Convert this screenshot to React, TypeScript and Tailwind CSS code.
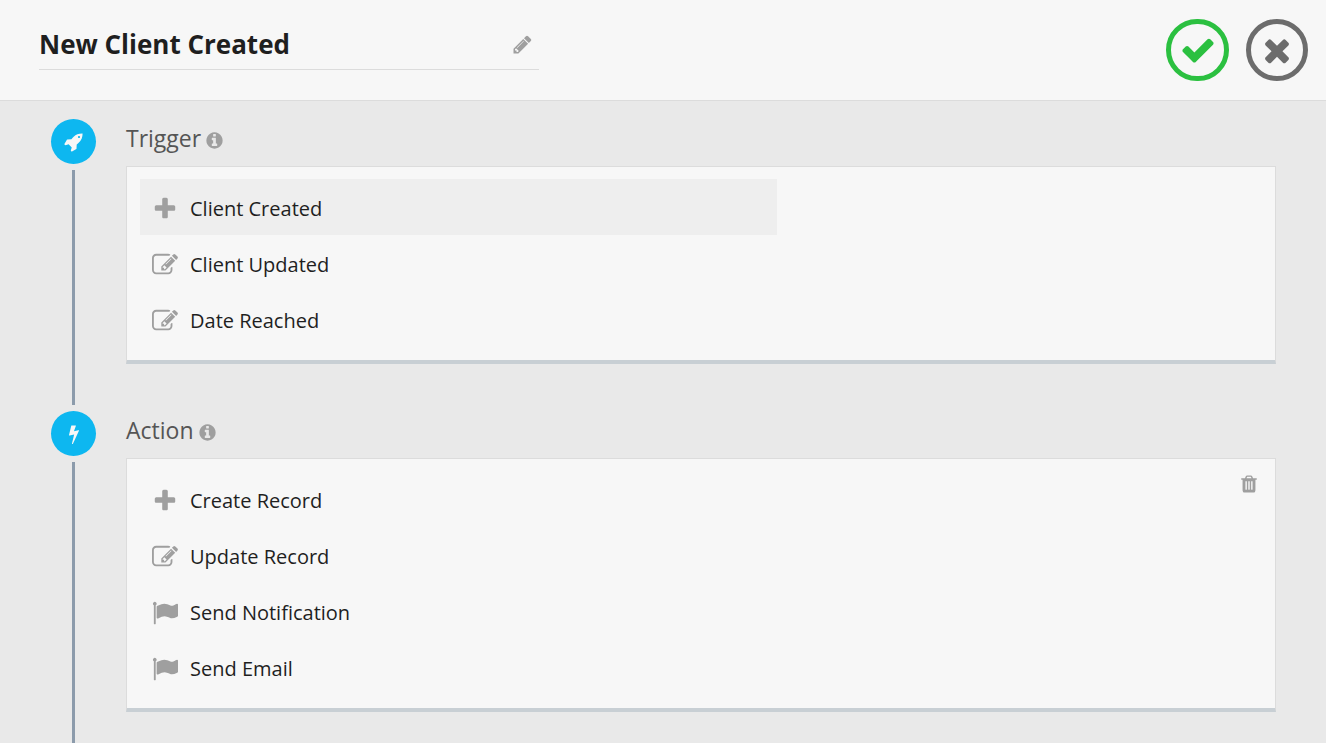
import { useState } from "react";
import clsx from "clsx";

const icons = {
  plus: "M1600 736v192q0 40-28 68t-68 28h-416v416q0 40-28 68t-68 28h-192q-40 0-68-28t-28-68v-416h-416q-40 0-68-28t-28-68v-192q0-40 28-68t68-28h416v-416q0-40 28-68t68-28h192q40 0 68 28t28 68v416h416q40 0 68 28t28 68z",
  pencil:
    "M491 1536l91-91-235-235-91 91v107h128v128h107zm523-928q0-22-22-22-10 0-17 7l-542 542q-7 7-7 17 0 22 22 22 10 0 17-7l542-542q7-7 7-17zm-54-192l416 416-832 832h-416v-416zm683 96q0 53-37 90l-166 166-416-416 166-165q36-38 90-38 53 0 91 38l235 234q37 39 37 91z",
  edit: "M888 1184l116-116-152-152-116 116v56h96v96h56zm440-720q-16-16-33 1l-350 350q-17 17-1 33t33-1l350-350q17-17 1-33zm80 594v190q0 119-84.5 203.5t-203.5 84.5h-832q-119 0-203.5-84.5t-84.5-203.5v-832q0-119 84.5-203.5t203.5-84.5h832q63 0 117 25 15 7 18 23 3 17-9 29l-49 49q-14 14-32 8-23-6-45-6h-832q-66 0-113 47t-47 113v832q0 66 47 113t113 47h832q66 0 113-47t47-113v-126q0-13 9-22l64-64q15-15 35-7t20 29zm-96-738l288 288-672 672h-288v-288zm444 132l-92 92-288-288 92-92q28-28 68-28t68 28l152 152q28 28 28 68t-28 68z",
  info: "M1152 1376v-160q0-14-9-23t-23-9h-96v-512q0-14-9-23t-23-9h-320q-14 0-23 9t-9 23v160q0 14 9 23t23 9h96v320h-96q-14 0-23 9t-9 23v160q0 14 9 23t23 9h448q14 0 23-9t9-23zm-128-896v-160q0-14-9-23t-23-9h-192q-14 0-23 9t-9 23v160q0 14 9 23t23 9h192q14 0 23-9t9-23zm640 416q0 209-103 385.5t-279.5 279.5-385.5 103-385.5-103-279.5-279.5-103-385.5 103-385.5 279.5-279.5 385.5-103 385.5 103 279.5 279.5 103 385.5z",
  check:
    "M1671 566q0 40-28 68l-724 724-136 136q-28 28-68 28t-68-28l-136-136-362-362q-28-28-28-68t28-68l136-136q28-28 68-28t68 28l294 295 656-657q28-28 68-28t68 28l136 136q28 28 28 68z",
  times:
    "M1490 1322q0 40-28 68l-136 136q-28 28-68 28t-68-28l-294-294-294 294q-28 28-68 28t-68-28l-136-136q-28-28-28-68t28-68l294-294-294-294q-28-28-28-68t28-68l136-136q28-28 68-28t68 28l294 294 294-294q28-28 68-28t68 28l136 136q28 28 28 68t-28 68l-294 294 294 294q28 28 28 68z",
  trash:
    "M704 1376v-704q0-14-9-23t-23-9h-64q-14 0-23 9t-9 23v704q0 14 9 23t23 9h64q14 0 23-9t9-23zm256 0v-704q0-14-9-23t-23-9h-64q-14 0-23 9t-9 23v704q0 14 9 23t23 9h64q14 0 23-9t9-23zm256 0v-704q0-14-9-23t-23-9h-64q-14 0-23 9t-9 23v704q0 14 9 23t23 9h64q14 0 23-9t9-23zm-544-992h448l-48-117q-7-9-17-11h-317q-10 2-17 11zm928 32v64q0 14-9 23t-23 9h-96v948q0 83-47 143.5t-113 60.5h-832q-66 0-113-58.5t-47-141.5v-952h-96q-14 0-23-9t-9-23v-64q0-14 9-23t23-9h309l70-167q15-37 54-63t79-26h320q40 0 79 26t54 63l70 167h309q14 0 23 9t9 23z",
  bolt: "M1333 566q18 20 7 44l-540 1157q-13 25-42 25-4 0-14-2-17-5-25.5-19t-4.5-30l197-808-406 101q-4 1-12 1-18 0-31-11-18-15-13-39l201-825q4-14 16-23t28-9h328q19 0 32 12.5t13 29.5q0 8-5 18l-171 463 396-98q8-2 12-2 19 0 34 15z",
  rocket:
    "M1440 448q0-40-28-68t-68-28-68 28-28 68 28 68 68 28 68-28 28-68zm224-288q0 249-75.5 430.5t-253.5 360.5q-81 80-195 176l-20 379q-2 16-16 26l-384 224q-7 4-16 4-12 0-23-9l-64-64q-13-14-8-32l85-276-281-281-276 85q-3 1-9 1-14 0-23-9l-64-64q-17-19-5-39l224-384q10-14 26-16l379-20q96-114 176-195 188-187 358-258t431-71q14 0 24 9.5t10 22.5z",
  flag: "M320 256q0 72-64 110v1266q0 13-9.5 22.5t-22.5 9.5h-64q-13 0-22.5-9.5t-9.5-22.5v-1266q-64-38-64-110 0-53 37.5-90.5t90.5-37.5 90.5 37.5 37.5 90.5zm1472 64v763q0 25-12.5 38.5t-39.5 27.5q-215 116-369 116-61 0-123.5-22t-108.5-48-115.5-48-142.5-22q-192 0-464 146-17 9-33 9-26 0-45-19t-19-45v-742q0-32 31-55 21-14 79-43 236-120 421-120 107 0 200 29t219 88q38 19 88 19 54 0 117.5-21t110-47 88-47 54.5-21q26 0 45 19t19 45z",
};

type IconName = keyof typeof icons;

function Icon({ name, className }: { name: IconName; className: string }) {
  return (
    <svg viewBox="0 0 1792 1792" fill="currentColor" aria-hidden="true" className={clsx("shrink-0", className)}>
      <path d={icons[name]} />
    </svg>
  );
}

type Option = { icon: IconName; label: string };

type StepProps = {
  title: string;
  icon: IconName;
  options: Option[];
  initial?: string;
  removable?: boolean;
  last?: boolean;
};

function Step({ title, icon, options, initial, removable, last }: StepProps) {
  const [selected, setSelected] = useState(initial);
  return (
    <section className={clsx("flex gap-[30px]", last && "grow")}>
      <div className="flex w-[45px] shrink-0 flex-col items-center">
        <div className="flex size-[45px] items-center justify-center rounded-full bg-[#0db7f0] text-[#f7f7f7]">
          <Icon name={icon} className="size-5" />
        </div>
        <div className={clsx("mt-1.5 w-[3px] grow bg-[#8c9bab]", !last && "mb-1.5")} />
      </div>
      <div className={clsx("min-w-0 grow", last ? "pb-6" : "pb-[47px]")}>
        <div className="flex h-[47px] items-start gap-1">
          <h2 className="text-[23px] leading-[38px] text-[#555555]">{title}</h2>
          <button type="button" aria-label={`About ${title}`} className="mt-3 text-[#9f9f9f]">
            <Icon name="info" className="size-[19px]" />
          </button>
        </div>
        <div className="flex items-start justify-between border border-b-4 border-[#dcdcdc] border-b-[#c8cfd4] bg-[#f7f7f7] px-[13px] pt-3 pb-[13px]">
          <ul className="w-[637px]">
            {options.map((option) => (
              <li key={option.label}>
                <button
                  type="button"
                  aria-pressed={selected === option.label}
                  onClick={() => setSelected(option.label)}
                  className={clsx(
                    "flex h-14 w-full items-center gap-3 px-3 pt-1 text-left text-xl text-[#1f1f1f]",
                    selected === option.label && "bg-[#eeeeee]",
                  )}
                >
                  <Icon name={option.icon} className="size-[26px] text-[#9f9f9f]" />
                  <span>{option.label}</span>
                </button>
              </li>
            ))}
          </ul>
          {removable && (
            <button type="button" aria-label={`Remove ${title}`} className="mt-[3px] mr-[3px] text-[#9f9f9f]">
              <Icon name="trash" className="size-5" />
            </button>
          )}
        </div>
      </div>
    </section>
  );
}

export default function App() {
  const [name, setName] = useState("New Client Created");
  return (
    <div className="flex min-h-screen flex-col bg-[#e9e9e9] font-['Open_Sans',sans-serif]">
      <header className="flex items-start justify-between border-b border-[#dcdcdc] bg-[#f7f7f7] pt-[19px] pr-[18px] pb-[19px] pl-[39px]">
        <div className="flex h-[51px] w-[500px] items-center border-b border-[#dcdcdc] pr-1.5">
          <input
            id="workflow-name"
            aria-label="Workflow name"
            value={name}
            onChange={(event) => setName(event.target.value)}
            className="min-w-0 grow bg-transparent text-[26px] leading-9 font-bold text-[#1f1f1f] outline-none"
          />
          <label htmlFor="workflow-name" aria-label="Edit name" className="text-[#9f9f9f]">
            <Icon name="pencil" className="size-[21px]" />
          </label>
        </div>
        <div className="flex gap-[17px]">
          <button
            type="button"
            aria-label="Save"
            className="flex h-[62px] w-[63px] items-center justify-center rounded-full border-5 border-[#2bc040] text-[#2bc040]"
          >
            <Icon name="check" className="size-9" />
          </button>
          <button
            type="button"
            aria-label="Cancel"
            className="flex size-[62px] items-center justify-center rounded-full border-5 border-[#6c6c6c] text-[#6c6c6c]"
          >
            <Icon name="times" className="size-9" />
          </button>
        </div>
      </header>
      <main className="flex grow flex-col pt-[18px] pr-[50px] pl-[51px]">
        <Step
          title="Trigger"
          icon="rocket"
          initial="Client Created"
          options={[
            { icon: "plus", label: "Client Created" },
            { icon: "edit", label: "Client Updated" },
            { icon: "edit", label: "Date Reached" },
          ]}
        />
        <Step
          title="Action"
          icon="bolt"
          removable
          last
          options={[
            { icon: "plus", label: "Create Record" },
            { icon: "edit", label: "Update Record" },
            { icon: "flag", label: "Send Notification" },
            { icon: "flag", label: "Send Email" },
          ]}
        />
      </main>
    </div>
  );
}
